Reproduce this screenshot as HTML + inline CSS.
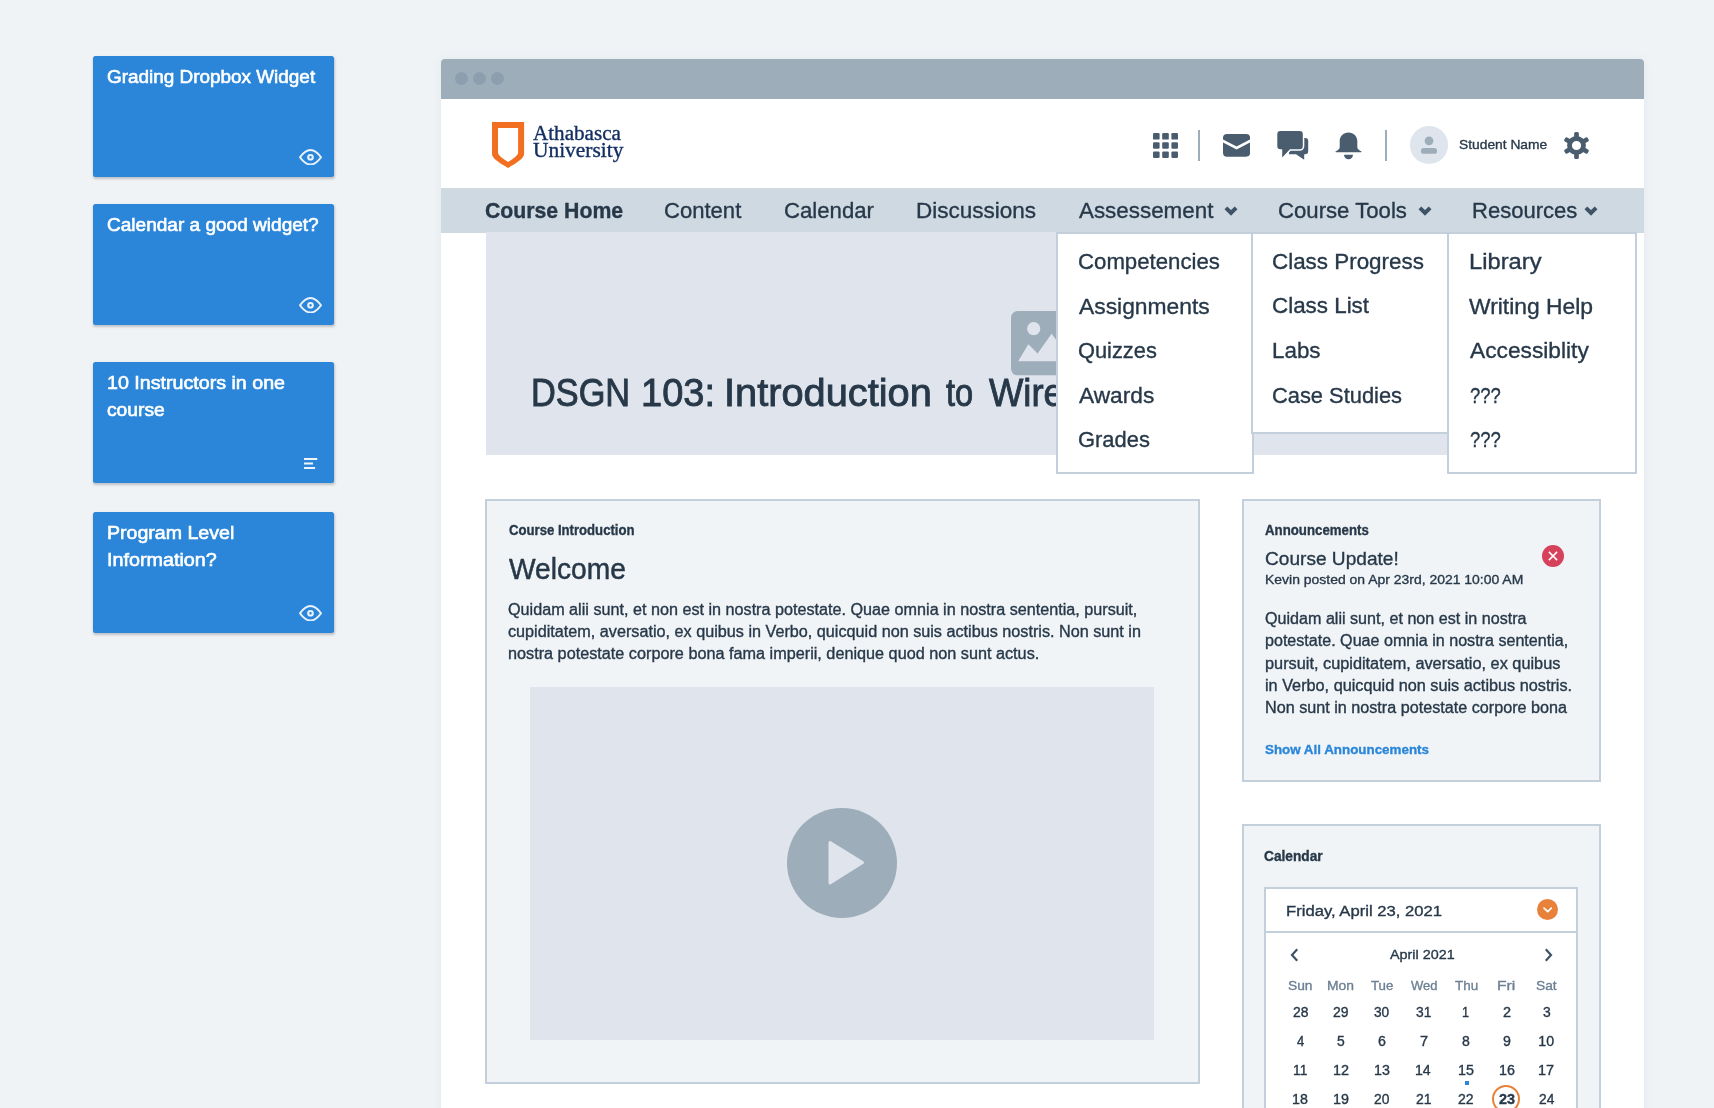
<!DOCTYPE html>
<html><head><meta charset="utf-8"><title>Course Home wireframe</title>
<style>
html,body{margin:0;padding:0;}
body{width:1714px;height:1108px;overflow:hidden;position:relative;background:#eff3f6;font-family:"Liberation Sans",sans-serif;}
.t{position:absolute;white-space:nowrap;line-height:1;transform-origin:0 0;-webkit-text-stroke:.35px currentColor;}
.b{position:absolute;box-sizing:border-box;}
</style></head><body><div id="root" style="position:absolute;left:0;top:0;width:1714px;height:1108px;will-change:transform;">
<div class="b" style="left:93px;top:56px;width:240.7px;height:120.6px;background:#2b86d9;border-radius:2.5px;box-shadow:.5px 1.2px 2.2px rgba(60,62,66,.26);"></div>
<div class="t" style="left:106.75px;top:68.00px;font-size:18.3px;color:#fff;transform:scaleX(1.0345);-webkit-text-stroke:.6px #fff;">Grading Dropbox Widget</div>
<svg class="b" style="left:298.8px;top:148.8px;" width="23" height="16.5" viewBox="0 0 23 16.5"><path d="M1 8.250C5 2.600 8.500 1 11.500 1S18 2.600 22 8.250C18 13.900 14.500 15.500 11.500 15.500S5 13.900 1 8.250z" fill="none" stroke="#eaf3fc" stroke-width="2" stroke-linejoin="round"/><circle cx="11.500" cy="8.250" r="2.300" fill="none" stroke="#eaf3fc" stroke-width="2.100"/></svg>
<div class="b" style="left:93px;top:204px;width:240.7px;height:120.6px;background:#2b86d9;border-radius:2.5px;box-shadow:.5px 1.2px 2.2px rgba(60,62,66,.26);"></div>
<div class="t" style="left:106.75px;top:216.00px;font-size:18.3px;color:#fff;transform:scaleX(1.0414);-webkit-text-stroke:.6px #fff;">Calendar a good widget?</div>
<svg class="b" style="left:298.8px;top:296.8px;" width="23" height="16.5" viewBox="0 0 23 16.5"><path d="M1 8.250C5 2.600 8.500 1 11.500 1S18 2.600 22 8.250C18 13.900 14.500 15.500 11.500 15.500S5 13.900 1 8.250z" fill="none" stroke="#eaf3fc" stroke-width="2" stroke-linejoin="round"/><circle cx="11.500" cy="8.250" r="2.300" fill="none" stroke="#eaf3fc" stroke-width="2.100"/></svg>
<div class="b" style="left:93px;top:362px;width:240.7px;height:120.6px;background:#2b86d9;border-radius:2.5px;box-shadow:.5px 1.2px 2.2px rgba(60,62,66,.26);"></div>
<div class="t" style="left:107.13px;top:374.00px;font-size:18.3px;color:#fff;transform:scaleX(1.0746);-webkit-text-stroke:.6px #fff;">10 Instructors in one</div>
<div class="t" style="left:107.13px;top:401.00px;font-size:18.3px;color:#fff;transform:scaleX(1.0517);-webkit-text-stroke:.6px #fff;">course</div>
<svg class="b" style="left:304px;top:458px;" width="14" height="11" viewBox="0 0 14 11"><path d="M0 1h13.300M0 5.500h9M0 10h11.100" stroke="#eef5fc" stroke-width="1.900" fill="none"/></svg>
<div class="b" style="left:93px;top:512px;width:240.7px;height:120.6px;background:#2b86d9;border-radius:2.5px;box-shadow:.5px 1.2px 2.2px rgba(60,62,66,.26);"></div>
<div class="t" style="left:106.93px;top:524.00px;font-size:18.3px;color:#fff;transform:scaleX(1.0705);-webkit-text-stroke:.6px #fff;">Program Level</div>
<div class="t" style="left:106.72px;top:551.00px;font-size:18.3px;color:#fff;transform:scaleX(1.0808);-webkit-text-stroke:.6px #fff;">Information?</div>
<svg class="b" style="left:298.8px;top:604.8px;" width="23" height="16.5" viewBox="0 0 23 16.5"><path d="M1 8.250C5 2.600 8.500 1 11.500 1S18 2.600 22 8.250C18 13.900 14.500 15.500 11.500 15.500S5 13.900 1 8.250z" fill="none" stroke="#eaf3fc" stroke-width="2" stroke-linejoin="round"/><circle cx="11.500" cy="8.250" r="2.300" fill="none" stroke="#eaf3fc" stroke-width="2.100"/></svg>
<div class="b" style="left:441px;top:59px;width:1203px;height:1060px;background:#fff;border-radius:4px 4px 0 0;box-shadow:0 0 8px rgba(90,110,130,.08);"></div>
<div class="b" style="left:441px;top:59px;width:1203px;height:40px;background:#9eadba;border-radius:4px 4px 0 0;"></div>
<div class="b" style="left:454.5px;top:72.4px;width:13px;height:13px;background:#8d9eae;border-radius:50%;"></div>
<div class="b" style="left:472.5px;top:72.4px;width:13px;height:13px;background:#8d9eae;border-radius:50%;"></div>
<div class="b" style="left:490.5px;top:72.4px;width:13px;height:13px;background:#8d9eae;border-radius:50%;"></div>
<svg class="b" style="left:484px;top:114px;" width="80" height="60" viewBox="0 0 80 60"><path d="M8 8H40.1V39.8C40.1 44.5 34 48 24.1 54.06C14.1 48 8 44.5 8 39.8Z" fill="#f26f21"/><path d="M14 14H34.1V39Q34.1 41.6 24.1 48.1Q14 41.600 14 39Z" fill="#fff"/></svg>
<div class="t" style="left:533.09px;top:123.00px;font-size:20px;color:#142f63;font-family:'Liberation Serif',serif;transform:scaleX(1.0556);">Athabasca</div>
<div class="t" style="left:533.07px;top:140.00px;font-size:20px;color:#142f63;font-family:'Liberation Serif',serif;transform:scaleX(1.0703);">University</div>
<div class="b" style="left:441px;top:188px;width:1203px;height:44.5px;background:#cfd9e2;"></div>
<div class="t" style="left:485.15px;top:200.00px;font-size:22.3px;color:#273849;font-weight:700;transform:scaleX(0.9527);">Course Home</div>
<div class="t" style="left:664.10px;top:200.00px;font-size:22.3px;color:#273849;transform:scaleX(0.9893);">Content</div>
<div class="t" style="left:783.59px;top:200.00px;font-size:22.3px;color:#273849;transform:scaleX(0.9946);">Calendar</div>
<div class="t" style="left:915.70px;top:200.00px;font-size:22.3px;color:#273849;transform:scaleX(1.0094);">Discussions</div>
<div class="t" style="left:1079.00px;top:200.00px;font-size:22.3px;color:#273849;transform:scaleX(1.0038);">Assessement</div>
<div class="t" style="left:1278.29px;top:200.00px;font-size:22.3px;color:#273849;transform:scaleX(0.9938);">Course Tools</div>
<div class="t" style="left:1471.64px;top:200.00px;font-size:22.3px;color:#273849;transform:scaleX(0.9882);">Resources</div>
<svg class="b" style="left:1224px;top:205.8px;" width="14" height="10.5" viewBox="0 0 14 10.5"><path d="M1.900 1.900L7 7l5.100-5.100" fill="none" stroke="#3f5366" stroke-width="4"/></svg>
<svg class="b" style="left:1418px;top:205.8px;" width="14" height="10.5" viewBox="0 0 14 10.5"><path d="M1.900 1.900L7 7l5.100-5.100" fill="none" stroke="#3f5366" stroke-width="4"/></svg>
<svg class="b" style="left:1584px;top:205.8px;" width="14" height="10.5" viewBox="0 0 14 10.5"><path d="M1.900 1.900L7 7l5.100-5.100" fill="none" stroke="#3f5366" stroke-width="4"/></svg>
<div class="b" style="left:486px;top:232px;width:1114px;height:223px;background:#e0e5ed;"></div>
<div class="t" style="left:530.66px;top:373.00px;font-size:39.5px;color:#273849;transform:scaleX(0.8687);-webkit-text-stroke:.9px currentColor;">DSGN</div>
<div class="t" style="left:641.45px;top:373.00px;font-size:39.5px;color:#273849;transform:scaleX(0.9629);-webkit-text-stroke:.9px currentColor;">103:</div>
<div class="t" style="left:723.62px;top:373.00px;font-size:39.5px;color:#273849;transform:scaleX(1.0067);-webkit-text-stroke:.9px currentColor;">Introduction</div>
<div class="t" style="left:946.31px;top:373.00px;font-size:39.5px;color:#273849;transform:scaleX(0.8244);-webkit-text-stroke:.9px currentColor;">to</div>
<div class="t" style="left:988.52px;top:373.00px;font-size:39.5px;color:#273849;transform:scaleX(0.9217);-webkit-text-stroke:.9px currentColor;">Wire</div>
<svg class="b" style="left:1010.9px;top:311.4px;" width="84" height="64.3" viewBox="0 0 84 64.3"><rect width="84" height="64.300" rx="6.500" fill="#9eadba"/><circle cx="22.700" cy="17.700" r="6.600" fill="#e0e5ed"/><path d="M7.200 50.300L17.300 33.200l9.300 9.300 14-19.800L58 46l6-5 12 9.300z" fill="#e0e5ed"/></svg>
<div class="b" style="left:1056px;top:232px;width:198px;height:242px;background:#fff;border:2px solid #c3cfdb;"></div>
<div class="b" style="left:1251px;top:232px;width:198px;height:202px;background:#fff;border:2px solid #c3cfdb;"></div>
<div class="b" style="left:1447px;top:232px;width:190px;height:242px;background:#fff;border:2px solid #c3cfdb;"></div>
<div class="b" style="left:1056px;top:230px;width:588px;height:2px;background:#cfd9e2;"></div>
<div class="t" style="left:1077.89px;top:251.00px;font-size:22.3px;color:#273849;transform:scaleX(0.9957);">Competencies</div>
<div class="t" style="left:1079.00px;top:296.00px;font-size:22.3px;color:#273849;transform:scaleX(1.0245);">Assignments</div>
<div class="t" style="left:1078.02px;top:340.00px;font-size:22.3px;color:#273849;transform:scaleX(0.9782);">Quizzes</div>
<div class="t" style="left:1079.00px;top:385.00px;font-size:22.3px;color:#273849;transform:scaleX(1.0172);">Awards</div>
<div class="t" style="left:1077.90px;top:429.00px;font-size:22.3px;color:#273849;transform:scaleX(0.9825);">Grades</div>
<div class="t" style="left:1271.88px;top:251.00px;font-size:22.3px;color:#273849;transform:scaleX(1.0047);">Class Progress</div>
<div class="t" style="left:1271.88px;top:295.00px;font-size:22.3px;color:#273849;transform:scaleX(1.0039);">Class List</div>
<div class="t" style="left:1271.91px;top:340.00px;font-size:22.3px;color:#273849;transform:scaleX(1.0038);">Labs</div>
<div class="t" style="left:1271.91px;top:385.00px;font-size:22.3px;color:#273849;transform:scaleX(0.9802);">Case Studies</div>
<div class="t" style="left:1469.10px;top:251.00px;font-size:22.3px;color:#273849;transform:scaleX(1.0642);">Library</div>
<div class="t" style="left:1469.49px;top:296.00px;font-size:22.3px;color:#273849;transform:scaleX(1.0252);">Writing Help</div>
<div class="t" style="left:1469.60px;top:340.00px;font-size:22.3px;color:#273849;transform:scaleX(1.0196);">Accessiblity</div>
<div class="t" style="left:1469.86px;top:385.00px;font-size:22.3px;color:#273849;transform:scaleX(0.8292);">???</div>
<div class="t" style="left:1469.86px;top:429.00px;font-size:22.3px;color:#273849;transform:scaleX(0.8292);">???</div>
<div class="b" style="left:485px;top:499px;width:715px;height:585px;background:#f0f4f7;border:2px solid #c3cfdb;"></div>
<div class="t" style="left:508.87px;top:523.00px;font-size:14.2px;color:#273849;font-weight:700;transform:scaleX(0.9258);">Course Introduction</div>
<div class="t" style="left:509.16px;top:554.00px;font-size:29.5px;color:#273849;transform:scaleX(0.9549);-webkit-text-stroke:.5px currentColor;">Welcome</div>
<div class="t" style="left:507.97px;top:602.00px;font-size:15.8px;color:#273849;transform:scaleX(1.0238);">Quidam alii sunt, et non est in nostra potestate. Quae omnia in nostra sententia, pursuit,</div>
<div class="t" style="left:508.05px;top:624.00px;font-size:15.8px;color:#273849;transform:scaleX(1.0253);">cupiditatem, aversatio, ex quibus in Verbo, quicquid non suis actibus nostris. Non sunt in</div>
<div class="t" style="left:507.65px;top:646.00px;font-size:15.8px;color:#273849;transform:scaleX(1.0271);">nostra potestate corpore bona fama imperii, denique quod non sunt actus.</div>
<div class="b" style="left:530px;top:687px;width:624px;height:353px;background:#e0e5ed;"></div>
<div class="b" style="left:786.7px;top:807.5px;width:110px;height:110px;background:#9eadba;border-radius:50%;"></div>
<svg class="b" style="left:826px;top:838px;" width="42" height="50" viewBox="0 0 42 50"><path d="M4 4.500L36.500 24.500 4 45z" fill="#e0e5ed" stroke="#e0e5ed" stroke-width="3" stroke-linejoin="round"/></svg>
<div class="b" style="left:1242px;top:499px;width:359px;height:283px;background:#f0f4f7;border:2px solid #c3cfdb;"></div>
<div class="t" style="left:1264.67px;top:523.00px;font-size:14.2px;color:#273849;font-weight:700;transform:scaleX(0.9335);">Announcements</div>
<div class="t" style="left:1265.05px;top:549.00px;font-size:19px;color:#273849;transform:scaleX(1.0051);">Course Update!</div>
<div class="t" style="left:1264.88px;top:573.00px;font-size:13.5px;color:#273849;transform:scaleX(1.0334);">Kevin posted on Apr 23rd, 2021 10:00 AM</div>
<div class="t" style="left:1265.47px;top:611.00px;font-size:15.8px;color:#273849;transform:scaleX(1.0199);">Quidam alii sunt, et non est in nostra</div>
<div class="t" style="left:1265.15px;top:633.00px;font-size:15.8px;color:#273849;transform:scaleX(1.0183);">potestate. Quae omnia in nostra sententia,</div>
<div class="t" style="left:1265.14px;top:656.00px;font-size:15.8px;color:#273849;transform:scaleX(1.0319);">pursuit, cupiditatem, aversatio, ex quibus</div>
<div class="t" style="left:1265.14px;top:678.00px;font-size:15.8px;color:#273849;transform:scaleX(1.0285);">in Verbo, quicquid non suis actibus nostris.</div>
<div class="t" style="left:1264.91px;top:700.00px;font-size:15.8px;color:#273849;transform:scaleX(1.0235);">Non sunt in nostra potestate corpore bona</div>
<div class="t" style="left:1264.60px;top:743.00px;font-size:13.5px;color:#2b86d9;font-weight:700;transform:scaleX(0.9905);">Show All Announcements</div>
<div class="b" style="left:1542px;top:544.6px;width:22px;height:22px;background:#d6425b;border-radius:50%;"></div>
<svg class="b" style="left:1548px;top:550.6px;" width="10" height="10" viewBox="0 0 10 10"><path d="M0.900 0.900l8.200 8.200M9.100 0.900l-8.200 8.200" stroke="#fff" stroke-width="1.500"/></svg>
<div class="b" style="left:1242px;top:824px;width:359px;height:301px;background:#f0f4f7;border:2px solid #c3cfdb;"></div>
<div class="t" style="left:1264.45px;top:849.00px;font-size:14.2px;color:#273849;font-weight:700;transform:scaleX(0.9667);">Calendar</div>
<div class="b" style="left:1264px;top:887px;width:314px;height:240px;background:#fff;border:2px solid #c3cfdb;"></div>
<div class="b" style="left:1264px;top:931px;width:314px;height:2px;background:#c3cfdb;"></div>
<div class="t" style="left:1285.67px;top:904.00px;font-size:14.9px;color:#273849;transform:scaleX(1.1174);">Friday, April 23, 2021</div>
<div class="b" style="left:1537.1px;top:898.9px;width:21.2px;height:21.2px;background:#e8823a;border-radius:50%;"></div>
<svg class="b" style="left:1543.1px;top:906.6px;" width="9.4" height="6.3" viewBox="0 0 9 6"><path d="M1 1l3.500 3.500L8 1" fill="none" stroke="#fff" stroke-width="1.600" stroke-linecap="round" stroke-linejoin="round"/></svg>
<div class="t" style="left:1390.00px;top:948.00px;font-size:13.5px;color:#273849;transform:scaleX(1.0641);">April 2021</div>
<svg class="b" style="left:1290.3px;top:947.5px;" width="9" height="14" viewBox="0 0 9 14"><path d="M7.200 1.200L2 7l5.200 5.800" fill="none" stroke="#3f5366" stroke-width="2.200"/></svg>
<svg class="b" style="left:1543.7px;top:947.5px;" width="9" height="14" viewBox="0 0 9 14"><path d="M1.800 1.200L7 7l-5.200 5.800" fill="none" stroke="#3f5366" stroke-width="2.200"/></svg>
<div class="t" style="left:1288.38px;top:979.00px;font-size:13.5px;color:#6b7f93;transform:scaleX(1.0202);">Sun</div>
<div class="t" style="left:1327.19px;top:979.00px;font-size:13.5px;color:#6b7f93;transform:scaleX(1.0288);">Mon</div>
<div class="t" style="left:1370.98px;top:979.00px;font-size:13.5px;color:#6b7f93;transform:scaleX(0.9831);">Tue</div>
<div class="t" style="left:1410.79px;top:979.00px;font-size:13.5px;color:#6b7f93;transform:scaleX(0.9613);">Wed</div>
<div class="t" style="left:1454.53px;top:979.00px;font-size:13.5px;color:#6b7f93;transform:scaleX(0.9967);">Thu</div>
<div class="t" style="left:1497.45px;top:979.00px;font-size:13.5px;color:#6b7f93;transform:scaleX(1.1619);">Fri</div>
<div class="t" style="left:1535.88px;top:979.00px;font-size:13.5px;color:#6b7f93;transform:scaleX(1.0217);">Sat</div>
<div class="t" style="left:1292.70px;top:1005.00px;font-size:14.2px;color:#273849;transform:scaleX(0.9804);">28</div>
<div class="t" style="left:1333.00px;top:1005.00px;font-size:14.2px;color:#273849;transform:scaleX(0.9852);">29</div>
<div class="t" style="left:1374.35px;top:1005.00px;font-size:14.2px;color:#273849;transform:scaleX(0.9662);">30</div>
<div class="t" style="left:1415.95px;top:1005.00px;font-size:14.2px;color:#273849;transform:scaleX(0.9756);">31</div>
<div class="t" style="left:1462.10px;top:1005.00px;font-size:14.2px;color:#273849;transform:scaleX(0.8904);">1</div>
<div class="t" style="left:1502.67px;top:1005.00px;font-size:14.2px;color:#273849;transform:scaleX(1.0215);">2</div>
<div class="t" style="left:1542.64px;top:1005.00px;font-size:14.2px;color:#273849;transform:scaleX(0.9785);">3</div>
<div class="t" style="left:1296.94px;top:1034.00px;font-size:14.2px;color:#273849;transform:scaleX(0.9204);">4</div>
<div class="t" style="left:1336.94px;top:1034.00px;font-size:14.2px;color:#273849;transform:scaleX(0.9785);">5</div>
<div class="t" style="left:1377.99px;top:1034.00px;font-size:14.2px;color:#273849;transform:scaleX(0.9995);">6</div>
<div class="t" style="left:1419.57px;top:1034.00px;font-size:14.2px;color:#273849;transform:scaleX(1.0215);">7</div>
<div class="t" style="left:1461.87px;top:1034.00px;font-size:14.2px;color:#273849;transform:scaleX(0.9889);">8</div>
<div class="t" style="left:1502.76px;top:1034.00px;font-size:14.2px;color:#273849;transform:scaleX(0.9995);">9</div>
<div class="t" style="left:1538.34px;top:1034.00px;font-size:14.2px;color:#273849;transform:scaleX(1.0000);">10</div>
<div class="t" style="left:1293.17px;top:1063.00px;font-size:14.2px;color:#273849;transform:scaleX(0.9698);">11</div>
<div class="t" style="left:1332.62px;top:1063.00px;font-size:14.2px;color:#273849;transform:scaleX(1.0152);">12</div>
<div class="t" style="left:1373.83px;top:1063.00px;font-size:14.2px;color:#273849;transform:scaleX(1.0050);">13</div>
<div class="t" style="left:1415.44px;top:1063.00px;font-size:14.2px;color:#273849;transform:scaleX(0.9950);">14</div>
<div class="t" style="left:1457.63px;top:1063.00px;font-size:14.2px;color:#273849;transform:scaleX(1.0050);">15</div>
<div class="t" style="left:1498.53px;top:1063.00px;font-size:14.2px;color:#273849;transform:scaleX(1.0050);">16</div>
<div class="t" style="left:1538.32px;top:1063.00px;font-size:14.2px;color:#273849;transform:scaleX(1.0152);">17</div>
<div class="t" style="left:1292.33px;top:1092.00px;font-size:14.2px;color:#273849;transform:scaleX(1.0050);">18</div>
<div class="t" style="left:1332.62px;top:1092.00px;font-size:14.2px;color:#273849;transform:scaleX(1.0101);">19</div>
<div class="t" style="left:1374.21px;top:1092.00px;font-size:14.2px;color:#273849;transform:scaleX(0.9756);">20</div>
<div class="t" style="left:1415.80px;top:1092.00px;font-size:14.2px;color:#273849;transform:scaleX(0.9852);">21</div>
<div class="t" style="left:1458.00px;top:1092.00px;font-size:14.2px;color:#273849;transform:scaleX(0.9901);">22</div>
<div class="b" style="left:1492.4px;top:1085px;width:28px;height:28px;background:#fff;border:2px solid #e8823a;border-radius:50%;"></div>
<div class="t" style="left:1498.70px;top:1092.00px;font-size:14.2px;color:#273849;font-weight:700;transform:scaleX(1.0157);">23</div>
<div class="t" style="left:1538.71px;top:1092.00px;font-size:14.2px;color:#273849;transform:scaleX(0.9709);">24</div>
<div class="b" style="left:1465px;top:1080.7px;width:4px;height:4px;background:#2b86d9;"></div>
<svg class="b" style="left:1153px;top:133px;" width="25" height="25" viewBox="0 0 25 25"><rect x="0.0" y="0.0" width="6.600" height="6.600" rx="1.200" fill="#4a5d6e"/><rect x="9.2" y="0.0" width="6.600" height="6.600" rx="1.200" fill="#4a5d6e"/><rect x="18.4" y="0.0" width="6.600" height="6.600" rx="1.200" fill="#4a5d6e"/><rect x="0.0" y="9.2" width="6.600" height="6.600" rx="1.200" fill="#4a5d6e"/><rect x="9.2" y="9.2" width="6.600" height="6.600" rx="1.200" fill="#4a5d6e"/><rect x="18.4" y="9.2" width="6.600" height="6.600" rx="1.200" fill="#4a5d6e"/><rect x="0.0" y="18.4" width="6.600" height="6.600" rx="1.200" fill="#4a5d6e"/><rect x="9.2" y="18.4" width="6.600" height="6.600" rx="1.200" fill="#4a5d6e"/><rect x="18.4" y="18.4" width="6.600" height="6.600" rx="1.200" fill="#4a5d6e"/></svg>
<div class="b" style="left:1198.3px;top:130px;width:2px;height:31px;background:#9eadba;"></div>
<div class="b" style="left:1384.9px;top:130px;width:2px;height:31px;background:#9eadba;"></div>
<svg class="b" style="left:1223px;top:134.1px;" width="27.2" height="22.8" viewBox="0 0 27.2 22.8"><rect width="27.200" height="22.800" rx="4" fill="#4a5d6e"/><path d="M-1 6.400l14.600 7.600L28.200 6.400" fill="none" stroke="#fff" stroke-width="2.600"/></svg>
<svg class="b" style="left:1277px;top:131px;" width="32" height="30" viewBox="0 0 32 30"><path d="M12 6.900h16.200a3 3 0 0 1 3 3v10.300a3 3 0 0 1-3 3h-1v5.500l-8.200-5.500H12z" fill="#4a5d6e"/><path d="M3.300 0.100h19.500a3 3 0 0 1 3 3v12.200a3 3 0 0 1-3 3H13l-7.800 8.200v-8.200H3.300a3 3 0 0 1-3-3V3.100a3 3 0 0 1 3-3z" fill="#4a5d6e" stroke="#fff" stroke-width="3" paint-order="stroke"/></svg>
<svg class="b" style="left:1335px;top:131.5px;" width="27" height="28" viewBox="0 0 27 28"><path d="M13.500 0.400C18.600 0.400 22.300 4 22.300 9V15C22.300 17 24 18.300 26.500 19.500Q26.800 20.300 26 20.300H1Q0.200 20.300 0.500 19.500C3 18.300 4.700 17 4.700 15V9C4.700 4 8.400 0.400 13.500 0.400Z" fill="#4a5d6e"/><path d="M9 22.700H18A4.500 4.500 0 0 1 9 22.700Z" fill="#4a5d6e"/></svg>
<div class="b" style="left:1410.2px;top:126.1px;width:37.6px;height:37.6px;background:#dfe5ec;border-radius:50%;"></div>
<svg class="b" style="left:1421px;top:136px;" width="16" height="18" viewBox="0 0 16 18"><circle cx="8" cy="4.800" r="4.400" fill="#9eadba"/><rect x="0" y="12" width="16" height="5.800" rx="2.600" fill="#9eadba"/></svg>
<div class="t" style="left:1459.18px;top:138.00px;font-size:13.5px;color:#273849;transform:scaleX(1.0218);">Student Name</div>
<svg class="b" style="left:1563px;top:131.8px;" width="27" height="27" viewBox="-13.5 -13.5 27 27"><circle r="7" fill="none" stroke="#4a5d6e" stroke-width="4.800"/><rect x="-2.350" y="-13.500" width="4.700" height="7" rx="1.500" transform="rotate(0)" fill="#4a5d6e"/><rect x="-2.350" y="-13.500" width="4.700" height="7" rx="1.500" transform="rotate(60)" fill="#4a5d6e"/><rect x="-2.350" y="-13.500" width="4.700" height="7" rx="1.500" transform="rotate(120)" fill="#4a5d6e"/><rect x="-2.350" y="-13.500" width="4.700" height="7" rx="1.500" transform="rotate(180)" fill="#4a5d6e"/><rect x="-2.350" y="-13.500" width="4.700" height="7" rx="1.500" transform="rotate(240)" fill="#4a5d6e"/><rect x="-2.350" y="-13.500" width="4.700" height="7" rx="1.500" transform="rotate(300)" fill="#4a5d6e"/></svg>
</div></body></html>
